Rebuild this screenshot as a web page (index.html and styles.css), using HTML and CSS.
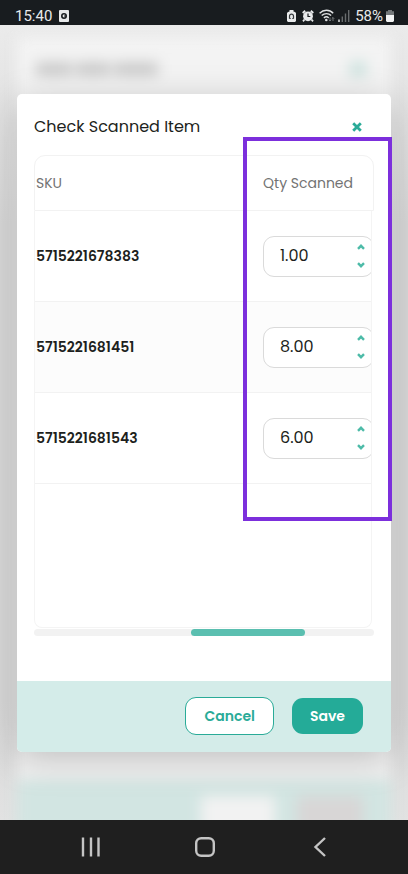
FILE: index.html
```html
<!DOCTYPE html>
<html lang="en">
<head>
<meta charset="utf-8">
<meta name="viewport" content="width=device-width, initial-scale=1">
<title>Check Scanned Item</title>
<link rel="stylesheet" href="styles.css">
</head>
<body>
<header class="status">
  <div class="status-group">
    <span class="clock">15:40</span>
    <svg width="10" height="12" viewBox="0 0 10 12"><rect width="10" height="12" rx="1" fill="#e8eaeb"/><circle cx="5" cy="6" r="2.2" fill="none" stroke="#181c1f" stroke-width="1.6"/><path d="M5 6h2" stroke="#181c1f"/></svg>
  </div>
  <div class="status-group status-right">
    <svg width="9" height="12" viewBox="0 0 9 12"><path d="M2.5 0h4v1.500L8 2l1 1v8l-1 1H1l-1-1V3l1-1 1.500-.5z" fill="#e8eaeb"/><path d="M2.500 8.500V6.200a2 2 0 0 1 4 0v2.300M2.300 8.500h1.400M5.300 8.500h1.400" fill="none" stroke="#34383b" stroke-width="1.200"/></svg>
    <svg class="alarm" width="12" height="12" viewBox="0 0 12 12"><path d="M.7 3 3.200.8M11.300 3 8.800.8M2.500 9.500 1 11.300M9.500 9.500l1.500 1.800" stroke="#e8eaeb" stroke-width="1.800"/><circle cx="6" cy="6.300" r="4.900" fill="#e8eaeb"/><path d="M6 3.500v3h2.300" fill="none" stroke="#181c1f" stroke-width="1.200"/></svg>
    <svg class="wifi" width="16" height="13" viewBox="0 0 16 13"><g fill="none" stroke="#e0e2e3" stroke-width="1.400"><path d="M.6 4.200C4.500.3 10.500.3 14.200 4.200M2.700 6.600c2.800-2.700 6.800-2.700 9.400 0M4.900 8.900c1.600-1.400 3.500-1.400 4.800 0"/></g><circle cx="7.300" cy="11" r="1.300" fill="#e0e2e3"/><path d="M11 8.500V12l-1.200-1.200M11 12l1.200-1.200M14 12V8.500l-1.200 1.200M14 8.500l1.200 1.200" fill="none" stroke="#7c8082" stroke-width=".9"/></svg>
    <svg class="signal" width="12" height="12" viewBox="0 0 12 12"><path d="M1 9.500V12" stroke="#e0e2e3" stroke-width="1.500"/><path d="M4.300 6.500V12M7.500 3.500V12M10.700 0v12" stroke="#686c6e" stroke-width="1.400"/></svg>
    <span>58%</span>
    <svg width="8" height="12" viewBox="0 0 8 12"><path d="M2 0h4v1.300h2V5H0V1.300h2z" fill="#74787a"/><path d="M0 5h8v6l-1 1H1l-1-1z" fill="#f2f3f3"/></svg>
  </div>
</header>

<main class="stage">
  <div class="ghost" aria-hidden="true">
    <div class="ghost-head"><i class="w1"></i><i class="w2"></i><i class="w3"></i><i class="ghost-x"></i></div>
    <div class="ghost-foot"><i class="ghost-light"></i><i class="ghost-dark"></i></div>
  </div>

  <section class="modal" role="dialog" aria-labelledby="title">
    <div class="modal-head">
      <h1 id="title">Check Scanned Item</h1>
      <button class="close" type="button" aria-label="Close"><svg width="10" height="10" viewBox="0 0 10 10"><path d="m1.200 1.200 7.600 7.600m0-7.600L1.200 8.800" stroke="#2aab98" stroke-width="2.800"/></svg></button>
    </div>

    <table class="items">
      <thead><tr><th scope="col">SKU</th><th scope="col" id="qty">Qty Scanned</th></tr></thead>
      <tbody>
        <tr><td class="sku">5715221678383</td><td><div class="stepper"><input type="text" inputmode="decimal" value="1.00" aria-labelledby="qty"><div class="arrows"><button type="button" aria-label="Increase"><svg width="8" height="6" viewBox="0 0 8 6"><path d="m1 4.800 3-3 3 3" /></svg></button><button type="button" aria-label="Decrease"><svg width="8" height="6" viewBox="0 0 8 6"><path d="m1 1.200 3 3 3-3" /></svg></button></div></div></td></tr>
        <tr><td class="sku">5715221681451</td><td><div class="stepper"><input type="text" inputmode="decimal" value="8.00" aria-labelledby="qty"><div class="arrows"><button type="button" aria-label="Increase"><svg width="8" height="6" viewBox="0 0 8 6"><path d="m1 4.800 3-3 3 3" /></svg></button><button type="button" aria-label="Decrease"><svg width="8" height="6" viewBox="0 0 8 6"><path d="m1 1.200 3 3 3-3" /></svg></button></div></div></td></tr>
        <tr><td class="sku">5715221681543</td><td><div class="stepper"><input type="text" inputmode="decimal" value="6.00" aria-labelledby="qty"><div class="arrows"><button type="button" aria-label="Increase"><svg width="8" height="6" viewBox="0 0 8 6"><path d="m1 4.800 3-3 3 3" /></svg></button><button type="button" aria-label="Decrease"><svg width="8" height="6" viewBox="0 0 8 6"><path d="m1 1.200 3 3 3-3" /></svg></button></div></div></td></tr>
      </tbody>
    </table>
    <div class="track"><div class="thumb"></div></div>

    <div class="modal-foot">
      <button class="btn cancel" type="button">Cancel</button>
      <button class="btn save" type="button">Save</button>
    </div>
    <div class="highlight"></div>
  </section>
</main>

<nav class="navbar">
  <button type="button" aria-label="Recent apps"><svg width="20" height="20" viewBox="0 0 20 20"><path d="M2 .5v19M10 .5v19M17.500 .5v19"/></svg></button>
  <button type="button" aria-label="Home"><svg width="20" height="20" viewBox="0 0 20 20"><rect x="1.200" y="1.200" width="17.600" height="17.600" rx="5"/></svg></button>
  <button type="button" aria-label="Back"><svg width="20" height="20" viewBox="0 0 20 20"><path d="M15 1 5.500 10l9.500 9"/></svg></button>
</nav>
</body>
</html>
```
FILE: styles.css
```css
* { box-sizing: border-box; }

body {
  margin: 0;
  min-height: 100vh;
  display: flex;
  flex-direction: column;
  font-family: Poppins, Inter, sans-serif;
  color: #1d1f20;
}

svg { display: block; flex: none; }

button {
  font: inherit;
  border: 0;
  padding: 0;
  background: none;
  cursor: pointer;
}

.status {
  height: 25px;
  padding: 6px 14px 0 15px;
  display: flex;
  justify-content: space-between;
  align-items: center;
  background: #181c1f;
  color: #e8eaeb;
  font: 15px/18px Roboto, sans-serif;
}

.status-group { display: flex; align-items: center; gap: 7px; }
.status-right { gap: 3px; }
.alarm { margin-left: 3px; }
.wifi { margin-left: 2px; }
.signal { margin-right: 2px; }

.stage {
  flex: 1;
  display: flex;
  padding: 69px 17px 68px;
  position: relative;
  z-index: 0;
  overflow: hidden;
  background: linear-gradient(#ebebeb, #d8d8d8 25%, #d8d8d8 85%, #e2e2e2);
}

.ghost {
  position: absolute;
  z-index: -1;
  inset: 12px 17px -20px;
  display: flex;
  flex-direction: column;
  justify-content: space-between;
  background: #f3f3f3;
  filter: blur(7px);
}

.ghost-head {
  display: flex;
  align-items: center;
  gap: 4px;
  height: 64px;
  padding: 0 25px 0 19px;
}

.ghost-head i { height: 12px; background: #c4c4c4; }
.w1 { width: 36px; }
.w2 { width: 34px; }
.w3 { width: 44px; }
.ghost-head .ghost-x { width: 16px; height: 14px; margin-left: auto; background: #c8e0dc; }

.ghost-foot {
  display: flex;
  justify-content: flex-end;
  align-items: flex-start;
  gap: 22px;
  height: 60px;
  padding: 16px 28px 0 0;
  background: #d2e5e2;
}

.ghost-foot i { height: 44px; }
.ghost-light { width: 74px; background: #f2f2f2; }
.ghost-dark { width: 66px; background: #d8d6d6; }

.modal {
  flex: 1;
  min-width: 0;
  position: relative;
  display: flex;
  flex-direction: column;
  border-radius: 5px;
  background: #fff;
  box-shadow: 0 8px 36px rgba(0, 0, 0, .21);
}

.modal-head {
  height: 61px;
  padding: 4px 29px 0 17px;
  display: flex;
  align-items: center;
  justify-content: space-between;
}

h1 { margin: 0; font-size: 16px; line-height: 24px; font-weight: 400; }

.items {
  flex: 1;
  display: flex;
  flex-direction: column;
  margin: 0 17px;
}

thead {
  display: block;
  border: 1px solid #f2f2f2;
  border-radius: 11px 11px 0 0;
}

tr { display: grid; grid-template-columns: 1fr 108px; align-items: center; }
thead tr { height: 54px; grid-template-columns: 1fr 110px; }

th {
  padding: 0 0 0 1px;
  text-align: left;
  font-size: 14px;
  line-height: 20px;
  font-weight: 400;
  color: #737373;
}

tbody {
  flex: 1;
  display: block;
  margin-right: 2px;
  overflow: hidden;
  border: 1px solid #f4f4f4;
  border-top: 0;
  border-radius: 0 0 8px 8px;
}

tbody tr { height: 91px; border-bottom: 1px solid #f2f2f2; }
tbody tr:nth-child(even) { background: #fcfcfc; }
td { padding: 0; }
.sku { padding-left: 1px; font-size: 14px; line-height: 20px; font-weight: 600; }
th + th, td + td { padding-left: 0; }

.stepper {
  display: flex;
  align-items: center;
  width: 111px;
  height: 41px;
  border: 1px solid #dadada;
  border-radius: 11px;
  background: #fff;
}

.stepper input {
  width: 93px;
  padding: 0 0 0 16px;
  border: 0;
  outline: 0;
  background: none;
  font: inherit;
  font-size: 16px;
  line-height: 24px;
  color: inherit;
}

.arrows { display: flex; flex-direction: column; gap: 12px; }
.arrows path { fill: none; stroke: #4dbba8; stroke-width: 2.400; }

.track {
  margin: 1px 17px 45px;
  height: 7px;
  border-radius: 4px;
  background: #f2f2f2;
}

.thumb {
  width: 33.333%;
  height: 7px;
  margin-left: 46.300%;
  border-radius: 4px;
  background: #5bbfb0;
}

.modal-foot {
  height: 71px;
  padding: 0 28px 2px;
  display: flex;
  align-items: center;
  justify-content: flex-end;
  gap: 18px;
  border-radius: 0 0 5px 5px;
  background: #d4ece9;
}

.btn {
  height: 36px;
  padding: 0 18px;
  border-radius: 11px;
  font-size: 14px;
  line-height: 20px;
  font-weight: 600;
}

.cancel { height: 38px; border: 1px solid #2aab98; background: #fff; color: #2aab98; }
.save { background: #24ab98; color: #fff; }

.highlight {
  position: absolute;
  top: 43px;
  right: -1px;
  width: 149px;
  height: 384px;
  border: 4px solid #7c2fdc;
  pointer-events: none;
}

.navbar {
  height: 54px;
  padding: 0 31px 0 34px;
  display: flex;
  align-items: center;
  background: #1f1f1f;
}

.navbar button { flex: 1; display: flex; justify-content: center; }
.navbar svg { fill: none; stroke: #c4c4c4; stroke-width: 2.400; }
```
